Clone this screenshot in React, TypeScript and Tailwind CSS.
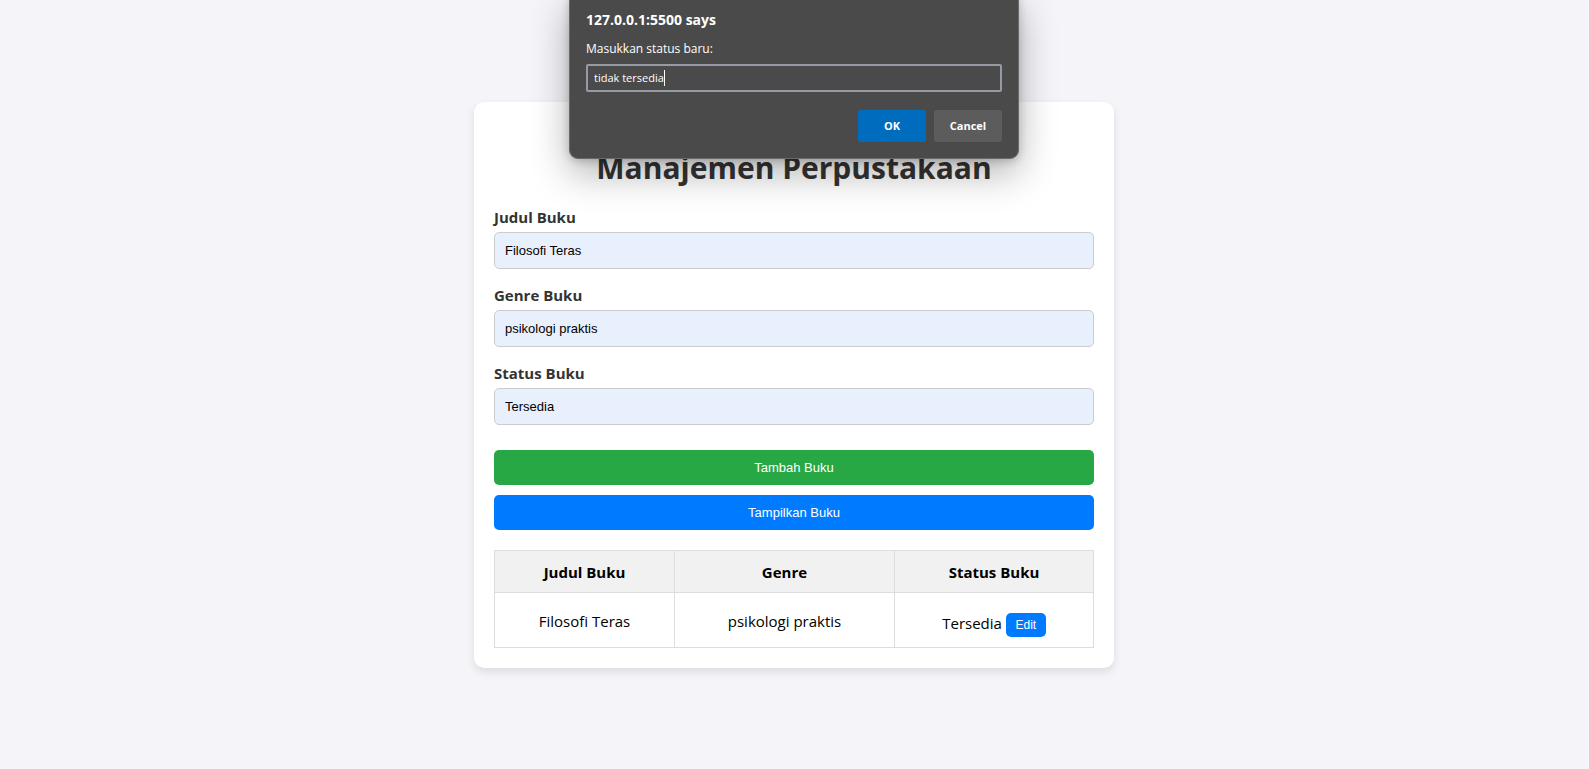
import { useState } from "react";

const fields = [
  { id: "judul", label: "Judul Buku", value: "Filosofi Teras" },
  { id: "genre", label: "Genre Buku", value: "psikologi praktis" },
  { id: "status", label: "Status Buku", value: "Tersedia" },
];

function Field({ id, label, value }: { id: string; label: string; value: string }) {
  return (
    <div className="mb-[15px]">
      <label htmlFor={id} className="mb-1 block text-[15px] leading-[22px] font-bold text-[#333333]">
        {label}
      </label>
      <input
        id={id}
        type="text"
        defaultValue={value}
        className="block h-[37px] w-full rounded-[5px] border border-[#cccccc] bg-[#e8f0fe] px-2.5 font-['Liberation_Sans',Arial,sans-serif] text-[13px] text-black outline-none"
      />
    </div>
  );
}

function PromptDialog() {
  const [text, setText] = useState("tidak tersedia");
  return (
    <div className="absolute inset-x-0 -top-2 flex justify-center pr-px">
      <div
        role="dialog"
        aria-labelledby="prompt-title"
        className="w-[450px] rounded-[9px] border border-[#6a6a6a] bg-[#4a4a4a] px-4 pt-[17px] pb-4 text-white shadow-[0_14px_38px_rgba(0,0,0,0.3),0_2px_8px_rgba(0,0,0,0.2)]"
      >
        <h2 id="prompt-title" className="text-[14px] leading-5 font-bold">
          127.0.0.1:5500 says
        </h2>
        <label htmlFor="prompt-input" className="mt-[9px] block text-[12px] leading-5">
          Masukkan status baru:
        </label>
        <div className="mt-[5px] flex h-7 items-center rounded-[2px] border-2 border-[#969ba3] px-1.5">
          <input
            id="prompt-input"
            type="text"
            value={text}
            onChange={(e) => setText(e.target.value)}
            className="max-w-full min-w-px bg-transparent text-[11px] leading-4 text-white caret-transparent outline-none [field-sizing:content]"
          />
          <span aria-hidden="true" className="h-4 w-px shrink-0 bg-white" />
        </div>
        <div className="mt-[18px] flex justify-end gap-2 text-[11px] font-bold">
          <button type="button" className="h-8 w-[68px] rounded-[3px] bg-[#006cbe]">
            OK
          </button>
          <button type="button" className="h-8 w-[68px] rounded-[3px] bg-[#5c5c5c]">
            Cancel
          </button>
        </div>
      </div>
    </div>
  );
}

export default function App() {
  return (
    <div className="relative flex min-h-screen items-center justify-center bg-[#f4f4f9] pr-px font-['Segoe_UI','Open_Sans',sans-serif] text-black">
      <main className="w-full max-w-[640px] rounded-[10px] bg-white p-5 shadow-[0_4px_8px_rgba(0,0,0,0.1)]">
        <h1 className="mt-[25px] mb-[17px] text-center text-[30px] leading-[42px] font-bold text-[#333333]">
          Manajemen Perpustakaan
        </h1>
        <form onSubmit={(e) => e.preventDefault()}>
          {fields.map((f) => (
            <Field key={f.id} {...f} />
          ))}
          <div className="mt-[25px] flex flex-col gap-2.5 font-['Liberation_Sans',Arial,sans-serif] text-[13px] leading-[15px] text-white">
            <button type="submit" className="h-[35px] rounded-[5px] bg-[#28a745]">
              Tambah Buku
            </button>
            <button type="button" className="h-[35px] rounded-[5px] bg-[#007bff]">
              Tampilkan Buku
            </button>
          </div>
        </form>
        <table className="mt-5 w-full table-fixed border-collapse text-center text-[15px] leading-[21px]">
          <thead>
            <tr className="h-[42px] bg-[#f1f1f1]">
              <th className="w-[180px] border border-[#dddddd] pt-0.5">Judul Buku</th>
              <th className="w-[220px] border border-[#dddddd] pt-0.5">Genre</th>
              <th className="border border-[#dddddd] pt-0.5">Status Buku</th>
            </tr>
          </thead>
          <tbody>
            <tr className="h-[55px]">
              <td className="border border-[#dddddd] pt-1">Filosofi Teras</td>
              <td className="border border-[#dddddd] pt-1">psikologi praktis</td>
              <td className="border border-[#dddddd] pt-2.5">
                Tersedia{" "}
                <button
                  type="button"
                  className="h-6 w-10 rounded-[5px] bg-[#007bff] font-['Liberation_Sans',Arial,sans-serif] text-[12px] leading-[14px] text-white"
                >
                  Edit
                </button>
              </td>
            </tr>
          </tbody>
        </table>
      </main>
      <PromptDialog />
    </div>
  );
}
